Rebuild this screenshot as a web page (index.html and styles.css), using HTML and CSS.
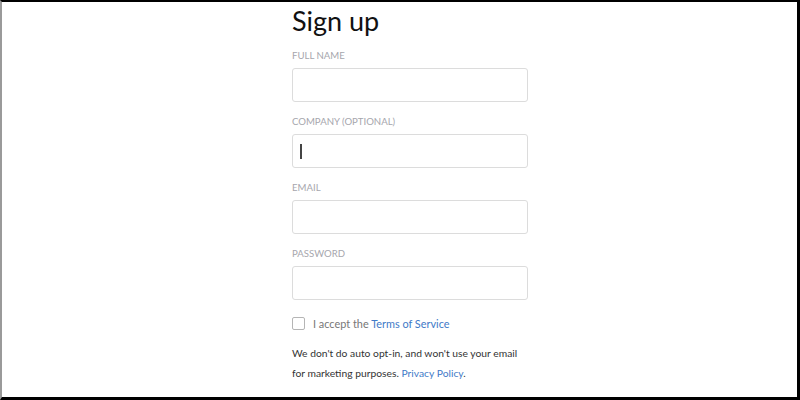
FILE: index.html
```html
<!DOCTYPE html>
<html>
<head>
<meta charset="utf-8">
<link rel="stylesheet" href="styles.css">
</head>
<body>
<div class="frame">
  <div class="form">
    <h1 class="title">Sign up</h1>
    <div class="field">
      <label class="label">Full name</label>
      <div class="input"></div>
    </div>
    <div class="field">
      <label class="label">Company (optional)</label>
      <div class="input"><span class="caret"></span></div>
    </div>
    <div class="field">
      <label class="label">Email</label>
      <div class="input"></div>
    </div>
    <div class="field">
      <label class="label">Password</label>
      <div class="input"></div>
    </div>
    <div class="accept">
      <span class="checkbox"></span>
      <span class="accept-text">I accept the <a class="link">Terms of Service</a></span>
    </div>
    <p class="note">We don't do auto opt-in, and won't use your email<br>for marketing purposes. <a class="link">Privacy Policy</a>.</p>
  </div>
</div>
</body>
</html>
```
FILE: styles.css
```css
html, body {
  margin: 0;
  padding: 0;
  background: #fff;
}
.frame {
  width: 800px;
  height: 400px;
  box-sizing: border-box;
  border-top: 2px solid #000;
  border-left: 2px solid #9a9a9a;
  border-right: 3px solid #000;
  border-bottom: 3px solid #000;
  overflow: hidden;
  font-family: Lato, "Noto Sans", sans-serif;
}
.form {
  width: 236px;
  margin-left: 290px;
  display: flex;
  flex-direction: column;
}
.title {
  margin: 2px 0 0;
  font-size: 27px;
  font-weight: 400;
  line-height: 34px;
  color: #111;
  height: 45px;
}
.field {
  display: flex;
  flex-direction: column;
  margin-bottom: 13px;
}
.label {
  font-size: 9.6px;
  line-height: 12px;
  padding-top: 1px;
  text-transform: uppercase;
  color: #a6a6ad;
  margin-bottom: 6px;
}
.input {
  height: 34px;
  box-sizing: border-box;
  border: 1px solid #dcdcdc;
  border-radius: 3px;
  display: flex;
  align-items: center;
  padding-left: 7px;
}
.caret {
  width: 2px;
  height: 15px;
  background: #444;
}
.accept {
  display: flex;
  align-items: center;
  margin-top: 3px;
  height: 14px;
}
.checkbox {
  width: 13px;
  height: 13px;
  box-sizing: border-box;
  border: 1px solid #b5b5b5;
  border-radius: 2px;
  margin-right: 8px;
}
.accept-text {
  font-size: 10.9px;
  color: #777;
}
.link {
  color: #3f7ac7;
  text-decoration: none;
}
.note {
  margin: 13px 0 0;
  font-size: 10.3px;
  line-height: 20px;
  color: #333;
}
```
